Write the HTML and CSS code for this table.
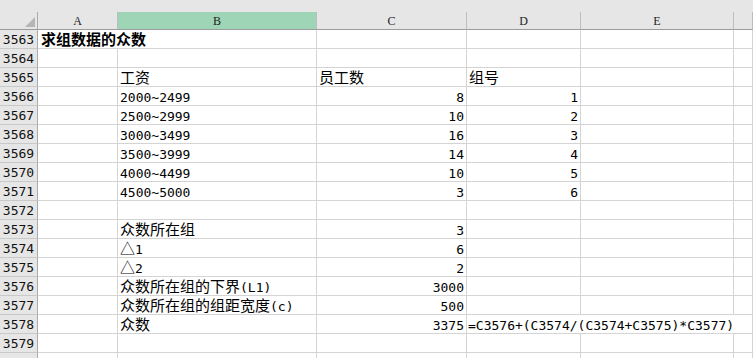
FILE: index.html
```html
<!DOCTYPE html>
<html lang="zh">
<head>
<meta charset="utf-8">
<title>求组数据的众数</title>
<link rel="stylesheet" href="styles.css">
</head>
<body>
<div class="app">
  <div class="topband"></div>
  <div class="sheet">
    <div class="ch corner"><span class="tri"></span></div>
    <div class="ch">A</div>
    <div class="ch sel">B</div>
    <div class="ch">C</div>
    <div class="ch">D</div>
    <div class="ch">E</div>
    <div class="ch"></div>

    <div class="rh">3563</div>
    <div class="c zh title span2">求组数据的众数</div>
    <div class="c"></div><div class="c"></div><div class="c"></div><div class="c"></div>

    <div class="rh">3564</div>
    <div class="c"></div><div class="c"></div><div class="c"></div><div class="c"></div><div class="c"></div><div class="c"></div>

    <div class="rh">3565</div>
    <div class="c"></div>
    <div class="c zh">工资</div>
    <div class="c zh">员工数</div>
    <div class="c zh">组号</div>
    <div class="c"></div><div class="c"></div>

    <div class="rh">3566</div>
    <div class="c"></div>
    <div class="c">2000~2499</div>
    <div class="c r">8</div>
    <div class="c r">1</div>
    <div class="c"></div><div class="c"></div>

    <div class="rh">3567</div>
    <div class="c"></div>
    <div class="c">2500~2999</div>
    <div class="c r">10</div>
    <div class="c r">2</div>
    <div class="c"></div><div class="c"></div>

    <div class="rh">3568</div>
    <div class="c"></div>
    <div class="c">3000~3499</div>
    <div class="c r">16</div>
    <div class="c r">3</div>
    <div class="c"></div><div class="c"></div>

    <div class="rh">3569</div>
    <div class="c"></div>
    <div class="c">3500~3999</div>
    <div class="c r">14</div>
    <div class="c r">4</div>
    <div class="c"></div><div class="c"></div>

    <div class="rh">3570</div>
    <div class="c"></div>
    <div class="c">4000~4499</div>
    <div class="c r">10</div>
    <div class="c r">5</div>
    <div class="c"></div><div class="c"></div>

    <div class="rh">3571</div>
    <div class="c"></div>
    <div class="c">4500~5000</div>
    <div class="c r">3</div>
    <div class="c r">6</div>
    <div class="c"></div><div class="c"></div>

    <div class="rh">3572</div>
    <div class="c"></div><div class="c"></div><div class="c"></div><div class="c"></div><div class="c"></div><div class="c"></div>

    <div class="rh">3573</div>
    <div class="c"></div>
    <div class="c zh">众数所在组</div>
    <div class="c r">3</div>
    <div class="c"></div><div class="c"></div><div class="c"></div>

    <div class="rh">3574</div>
    <div class="c"></div>
    <div class="c zh">△<span class="lat">1</span></div>
    <div class="c r">6</div>
    <div class="c"></div><div class="c"></div><div class="c"></div>

    <div class="rh">3575</div>
    <div class="c"></div>
    <div class="c zh">△<span class="lat">2</span></div>
    <div class="c r">2</div>
    <div class="c"></div><div class="c"></div><div class="c"></div>

    <div class="rh">3576</div>
    <div class="c"></div>
    <div class="c zh">众数所在组的下界<span class="lat">(L1)</span></div>
    <div class="c r">3000</div>
    <div class="c"></div><div class="c"></div><div class="c"></div>

    <div class="rh">3577</div>
    <div class="c"></div>
    <div class="c zh">众数所在组的组距宽度<span class="lat">(c)</span></div>
    <div class="c r">500</div>
    <div class="c"></div><div class="c"></div><div class="c"></div>

    <div class="rh">3578</div>
    <div class="c"></div>
    <div class="c zh">众数</div>
    <div class="c r">3375</div>
    <div class="c formula span3">=C3576+(C3574/(C3574+C3575)*C3577)</div>

    <div class="rh">3579</div>
    <div class="c"></div><div class="c"></div><div class="c"></div><div class="c"></div><div class="c"></div><div class="c"></div>

    <div class="rh"></div>
    <div class="c"></div><div class="c"></div><div class="c"></div><div class="c"></div><div class="c"></div><div class="c"></div>
  </div>
</div>
</body>
</html>
```
FILE: styles.css
```css
html, body {
  margin: 0;
  padding: 0;
  background: #ffffff;
  overflow: hidden;
}
.app {
  width: 753px;
  height: 358px;
  overflow: hidden;
}
.topband {
  height: 12px;
  background: #e6e6e6;
}
.sheet {
  display: grid;
  grid-template-columns: 38px 80px 199px 150px 114px 153px 1fr;
  grid-template-rows: 18px;
  grid-auto-rows: 19px;
  font-family: "DejaVu Sans Mono", "Noto Sans CJK SC", monospace;
  font-size: 13px;
  color: #000;
}
.ch {
  box-sizing: border-box;
  background: #e6e6e6;
  border-right: 1px solid #bdbdbd;
  border-bottom: 1px solid #9b9b9b;
  font-family: "Liberation Serif", "DejaVu Serif", serif;
  font-size: 12px;
  line-height: 17px;
  text-align: center;
  color: #222;
  padding-top: 1px;
}
.ch.sel {
  background: #9fd5b7;
}
.corner {
  position: relative;
  border-right: 1px solid #ababab;
}
.tri {
  position: absolute;
  right: 2px;
  bottom: 2px;
  width: 0;
  height: 0;
  border-left: 10px solid transparent;
  border-bottom: 10px solid #b5b5b5;
}
.rh {
  box-sizing: border-box;
  background: #e6e6e6;
  border-right: 1px solid #ababab;
  border-bottom: 1px solid #c9c9c9;
  text-align: center;
  line-height: 18px;
  padding-top: 1px;
  color: #111;
  overflow: hidden;
}
.c {
  box-sizing: border-box;
  border-right: 1px solid #d4d4d4;
  border-bottom: 1px solid #d4d4d4;
  line-height: 18px;
  padding: 2px 2px 0 2px;
  white-space: nowrap;
  overflow: visible;
  min-width: 0;
}
.c.r {
  text-align: right;
}
.c.zh {
  font-family: "Noto Sans CJK SC", "DejaVu Sans Mono", sans-serif;
  font-size: 15px;
  line-height: 18px;
  padding-top: 0;
}
.c.zh .lat {
  font-family: "DejaVu Sans Mono", monospace;
  font-size: 13px;
}
.c.title {
  font-weight: 700;
  padding-left: 3px;
}
.span2 {
  grid-column: span 2;
}
.span3 {
  grid-column: span 3;
}
.c.formula {
  padding-left: 1px;
}
```
